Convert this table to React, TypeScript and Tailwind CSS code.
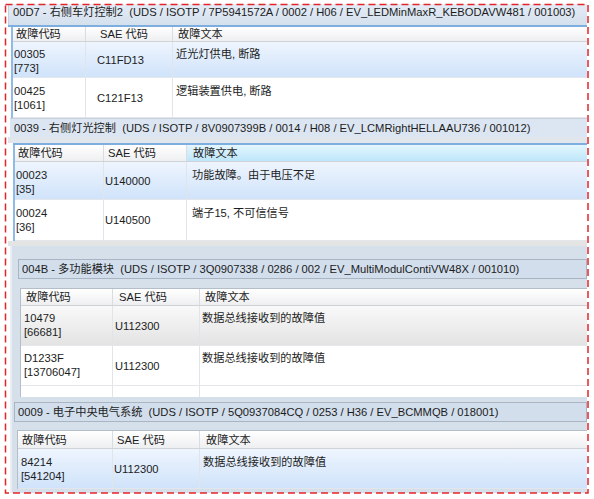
type Variant = 'sel' | 'plain' | 'gray'

interface Fault {
  code: string
  num: string
  sae: string
  text: string
  variant: Variant
  h: string
  pt: string
}

interface TableSpec {
  wrap: string
  head: string
  widths: [string, string, string]
  headPad: [string, string, string]
  headBg: [string, string, string]
  cellPad: [string, string, string]
  rows: Fault[]
  filler?: string
}

const ROW_BG: Record<Variant, string> = {
  sel: 'bg-linear-to-b from-[#eef5fe] to-[#d0e3fa]',
  plain: 'bg-white',
  gray: 'bg-linear-to-b from-[#f9f9f9] to-[#e3e3e3]',
}

const HEAD_WHITE = 'bg-linear-to-b from-white to-[#eeeff1]'
const HEAD_CYAN = 'bg-linear-to-b from-[#e4f6fe] to-[#bde6fa]'

const tableA1: TableSpec = {
  wrap: 'ml-[3px] border-l-2 border-[#8fbbe6]',
  head: 'h-[15px]',
  widths: ['w-[73px]', 'w-[87px]', 'flex-1'],
  headPad: ['pl-[3px]', 'pl-[14px]', 'pl-[5px]'],
  headBg: [HEAD_WHITE, HEAD_WHITE, HEAD_WHITE],
  cellPad: ['pl-[1px]', 'pl-[11px]', 'pl-[3px]'],
  rows: [
    { code: '00305', num: '[773]', sae: 'C11FD13', text: '近光灯供电, 断路', variant: 'sel', h: 'h-[36px]', pt: 'pt-[5px]' },
    { code: '00425', num: '[1061]', sae: 'C121F13', text: '逻辑装置供电, 断路', variant: 'plain', h: 'h-[40px]', pt: 'pt-[6px]' },
  ],
}

const tableA2: TableSpec = {
  wrap: 'ml-[5px] border-l-2 border-[#8fbbe6]',
  head: 'h-[17px]',
  widths: ['w-[89px]', 'w-[83px]', 'flex-1'],
  headPad: ['pl-[3px]', 'pl-[4px]', 'pl-[6px]'],
  headBg: [HEAD_WHITE, HEAD_WHITE, HEAD_CYAN],
  cellPad: ['pl-[1px]', 'pl-[1px]', 'pl-[5px]'],
  rows: [
    { code: '00023', num: '[35]', sae: 'U140000', text: '功能故障。由于电压不足', variant: 'sel', h: 'h-[38px]', pt: 'pt-[6px]' },
    { code: '00024', num: '[36]', sae: 'U140500', text: '端子15, 不可信信号', variant: 'plain', h: 'h-[41px]', pt: 'pt-[6px]' },
  ],
}

const tableB1: TableSpec = {
  wrap: 'mt-[9px] ml-[8px] border-l border-t border-[#b4bec9] bg-white',
  head: 'h-[17px]',
  widths: ['w-[92px]', 'w-[87px]', 'flex-1'],
  headPad: ['pl-[5px]', 'pl-[6px]', 'pl-[5px]'],
  headBg: [HEAD_WHITE, HEAD_WHITE, HEAD_WHITE],
  cellPad: ['pl-[3px]', 'pl-[2px]', 'pl-[2px]'],
  rows: [
    { code: '10479', num: '[66681]', sae: 'U112300', text: '数据总线接收到的故障值', variant: 'gray', h: 'h-[40px]', pt: 'pt-[5px]' },
    { code: 'D1233F', num: '[13706047]', sae: 'U112300', text: '数据总线接收到的故障值', variant: 'plain', h: 'h-[40px]', pt: 'pt-[5px]' },
  ],
  filler: 'h-[11px]',
}

const tableB2: TableSpec = {
  wrap: 'mt-[8px] ml-[5px] border-l border-t border-[#b4bec9] bg-white',
  head: 'h-[18px]',
  widths: ['w-[95px]', 'w-[87px]', 'flex-1'],
  headPad: ['pl-[4px]', 'pl-[4px]', 'pl-[6px]'],
  headBg: [HEAD_WHITE, HEAD_WHITE, HEAD_WHITE],
  cellPad: ['pl-[3px]', 'pl-[1px]', 'pl-[3px]'],
  rows: [
    { code: '84214', num: '[541204]', sae: 'U112300', text: '数据总线接收到的故障值', variant: 'sel', h: 'h-[40px]', pt: 'pt-[6px]' },
  ],
}

const HEADERS = ['故障代码', 'SAE 代码', '故障文本']

function FaultTable({ spec }: { spec: TableSpec }) {
  return (
    <div className={spec.wrap}>
      {/* column captions */}
      <div className={`flex ${spec.head} border-b border-[#cfd3d8]`}>
        {HEADERS.map((label, i) => (
          <div
            key={label}
            className={`${spec.widths[i]} ${spec.headPad[i]} ${spec.headBg[i]} flex items-center ${i < 2 ? 'border-r border-[#d9dde2]' : ''}`}
          >
            {label}
          </div>
        ))}
      </div>

      {spec.rows.map(row => (
        <div key={row.code} className={`flex ${row.h} ${ROW_BG[row.variant]} border-b border-[#e3e6ea]`}>
          <div className={`${spec.widths[0]} ${spec.cellPad[0]} ${row.pt} border-r border-[#e1e5ea] flex flex-col`}>
            <span>{row.code}</span>
            <span>{row.num}</span>
          </div>
          <div className={`${spec.widths[1]} ${spec.cellPad[1]} border-r border-[#e1e5ea] flex items-center`}>
            {row.sae}
          </div>
          <div className={`${spec.widths[2]} ${spec.cellPad[2]} ${row.pt}`}>{row.text}</div>
        </div>
      ))}

      {spec.filler && (
        <div className={`flex ${spec.filler} bg-white`}>
          <div className={`${spec.widths[0]} border-r border-[#e1e5ea]`} />
          <div className={`${spec.widths[1]} border-r border-[#e1e5ea]`} />
          <div className="flex-1" />
        </div>
      )}
    </div>
  )
}

export default function App() {
  return (
    <div className="relative w-[594px] h-[499px] bg-white overflow-hidden font-['Liberation_Sans','Noto_Sans_CJK_SC',sans-serif] text-[11.2px] leading-[14px] text-[#1c1c1c] whitespace-pre">
      {/* first capture */}
      <div className="ml-[8px] mr-[7px] pt-[4px] bg-white">
        <div className="h-[21px] pl-[4px] pt-[1px] border-l border-[#c5d0dc] bg-linear-to-b from-[#e4ecf6] to-[#d5e0ee]">
          {'00D7 - 右侧车灯控制2  (UDS / ISOTP / 7P5941572A / 0002 / H06 / EV_LEDMinMaxR_KEBODAVW481 / 001003)'}
        </div>
        <div className="h-[2px] bg-[#7eaee0]" />
        <FaultTable spec={tableA1} />

        <div className="ml-[2px] h-[19px] pl-[4px] pt-[2px] border-t border-[#c8d1db] bg-[#dce6f2]">
          {'0039 - 右侧灯光控制  (UDS / ISOTP / 8V0907399B / 0014 / H08 / EV_LCMRightHELLAAU736 / 001012)'}
        </div>
        <div className="h-[6px] bg-[#e1e6ec]" />
        <div className="ml-[5px] h-[2px] bg-[#7eaee0]" />
        <FaultTable spec={tableA2} />
        <div className="h-[5px] bg-[#e4e4e4]" />
      </div>

      {/* second capture */}
      <div className="ml-[10px] mr-[7px] h-[247px] pt-[13px] border-l-2 border-[#eaeef3] bg-[#d6e0ea]">
        <div className="ml-[6px] h-[20px] pl-[3px] flex items-center border border-[#a9b5c3] bg-[#d2deec]">
          {'004B - 多功能模块  (UDS / ISOTP / 3Q0907338 / 0286 / 002 / EV_MultiModulContiVW48X / 001010)'}
        </div>
        <FaultTable spec={tableB1} />

        <div className="mt-[5px] ml-[2px] h-[20px] pl-[3px] flex items-center border border-[#a9b5c3] bg-[#d2deec]">
          {'0009 - 电子中央电气系统  (UDS / ISOTP / 5Q0937084CQ / 0253 / H36 / EV_BCMMQB / 018001)'}
        </div>
        <FaultTable spec={tableB2} />
      </div>

      {/* red dashed annotation frame */}
      <svg className="absolute inset-0 pointer-events-none" width="594" height="499">
        <rect x="5.5" y="4.5" width="582.5" height="488.5" fill="none" stroke="#e3242b" strokeWidth="1.5" strokeDasharray="7 4" />
      </svg>
    </div>
  )
}
